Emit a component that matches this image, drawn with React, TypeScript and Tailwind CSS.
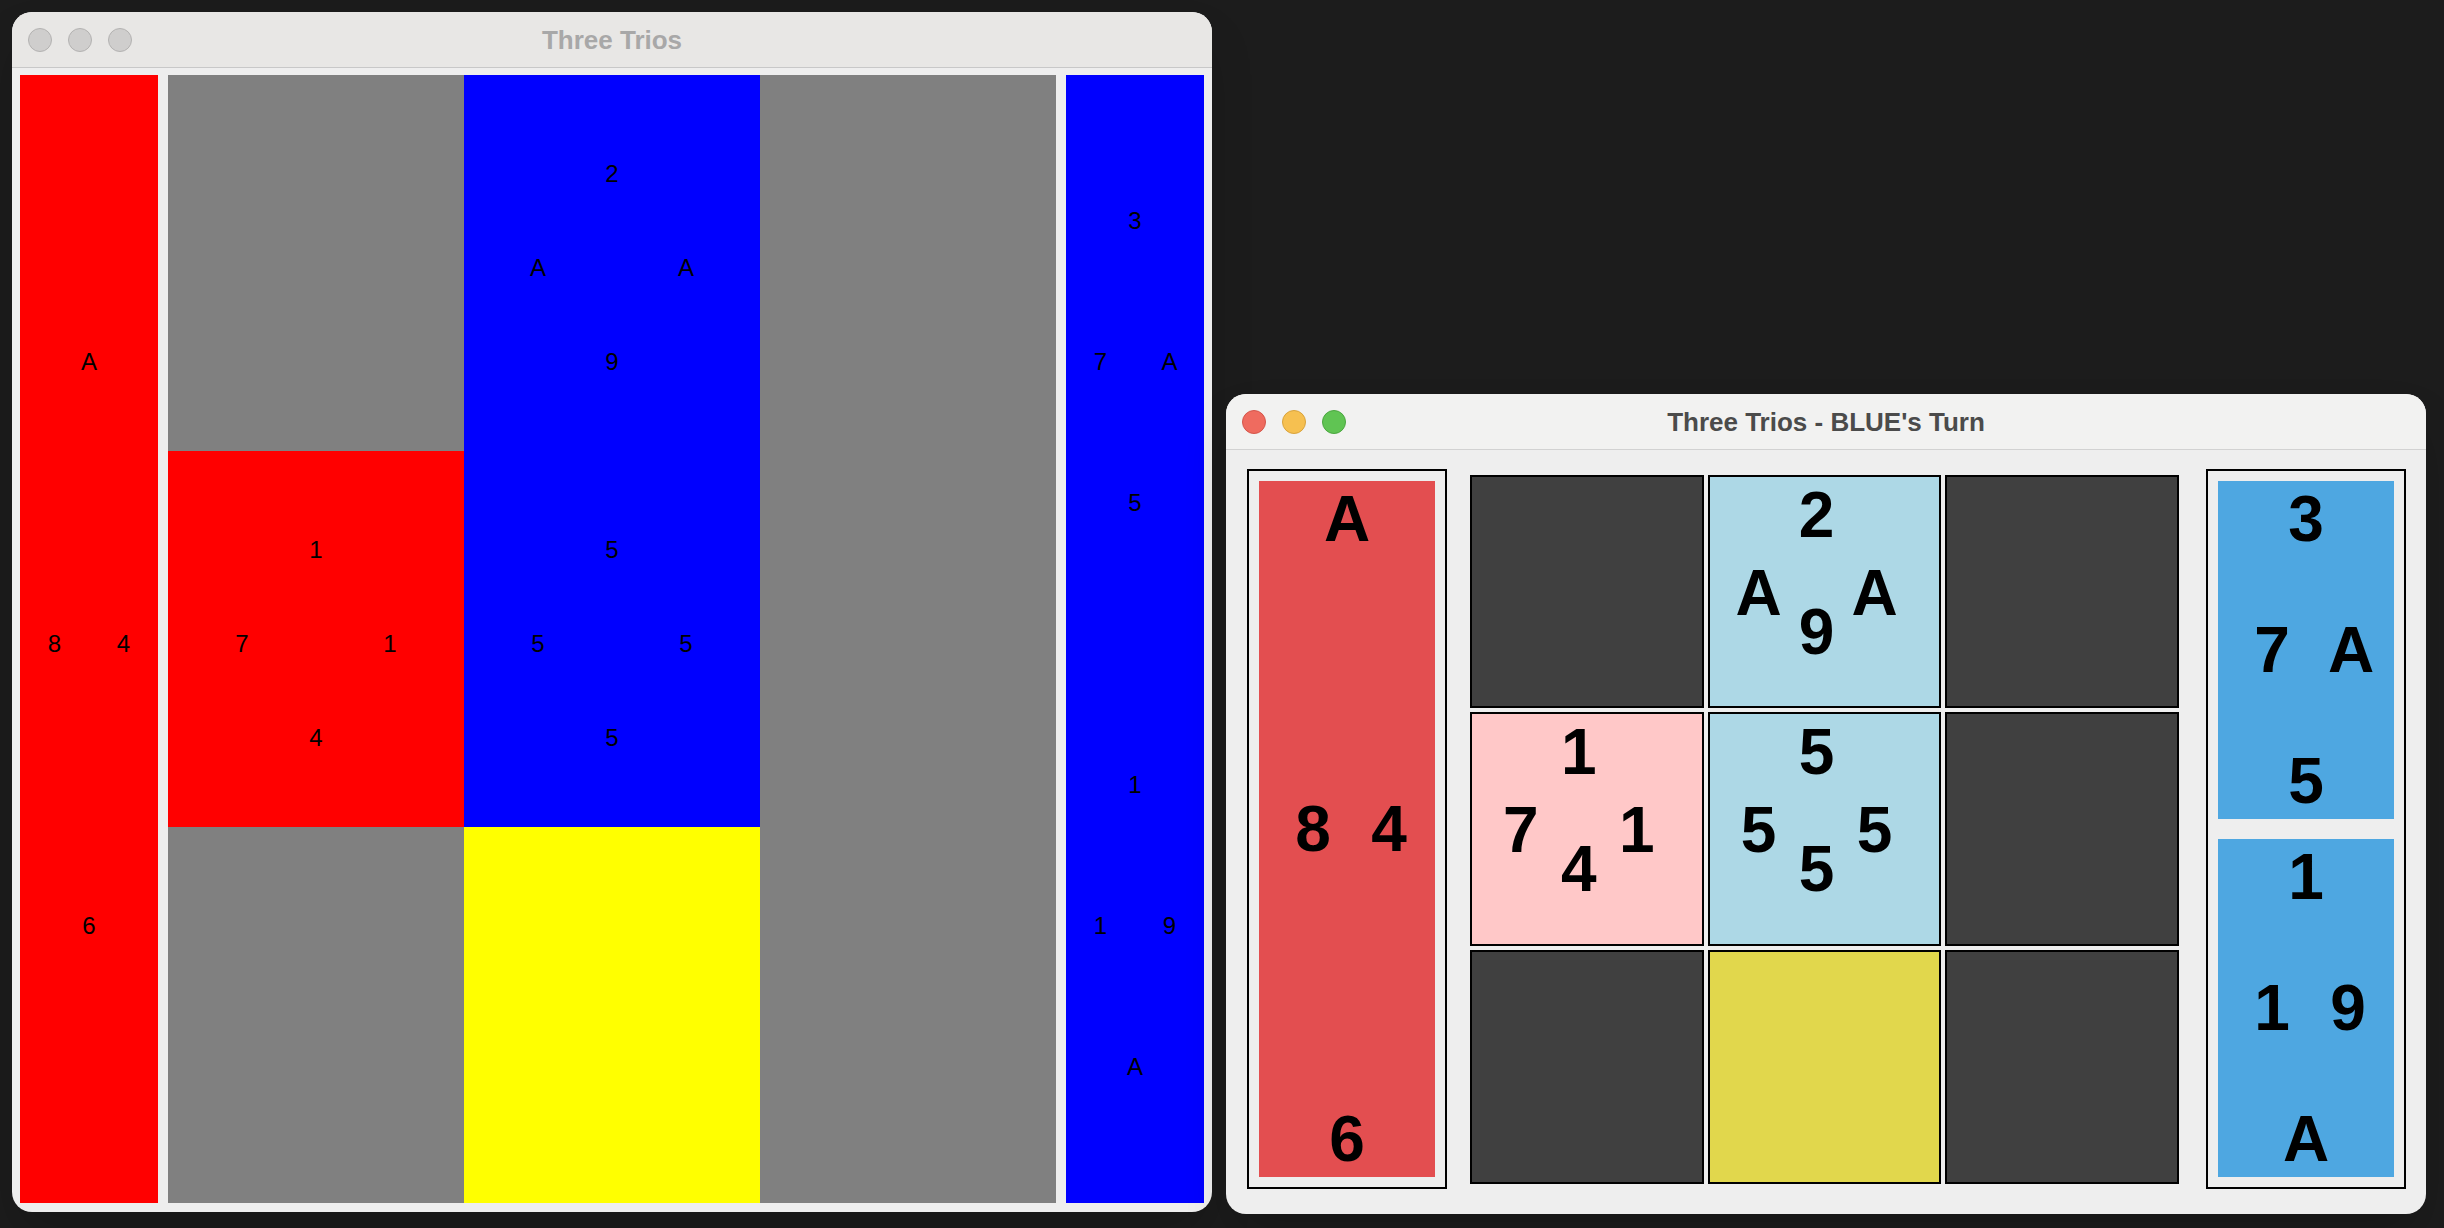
import React from "react";

type Vals = { n: string; e: string; s: string; w: string };

function Lights({ active }: { active: boolean }) {
  if (!active) {
    return (
      <div className="flex items-center gap-[16px] pl-[16px]">
        <div className="w-[24px] h-[24px] rounded-full bg-[#cfcecd] border border-[#b3b2b1]" />
        <div className="w-[24px] h-[24px] rounded-full bg-[#cfcecd] border border-[#b3b2b1]" />
        <div className="w-[24px] h-[24px] rounded-full bg-[#cfcecd] border border-[#b3b2b1]" />
      </div>
    );
  }
  return (
    <div className="flex items-center gap-[16px] pl-[16px]">
      <div className="w-[24px] h-[24px] rounded-full bg-[#ef6b5f] border border-[#d4564b]" />
      <div className="w-[24px] h-[24px] rounded-full bg-[#f6c050] border border-[#d9a33c]" />
      <div className="w-[24px] h-[24px] rounded-full bg-[#60c453] border border-[#4ba740]" />
    </div>
  );
}

function TitleBar({ title, active }: { title: string; active: boolean }) {
  return (
    <div
      className={`grid grid-cols-[1fr_auto_1fr] items-center h-[56px] border-b ${
        active ? "bg-[#f2f2f1] border-[#d2d2d2]" : "bg-[#e8e7e5] border-[#c8c8c8]"
      }`}
    >
      <Lights active={active} />
      <div
        className={`text-[26px] font-bold leading-none ${active ? "text-[#4b4b4b]" : "text-[#a8a8a8]"}`}
        style={{ fontFamily: '"Liberation Sans", Arial, sans-serif' }}
      >
        {title}
      </div>
      <div />
    </div>
  );
}

/* Small (plain) card used in the first window */
function SmallCard({ bg, pad, v }: { bg: string; pad: string; v: Vals }) {
  return (
    <div
      className={`${bg} ${pad} grid grid-cols-3 grid-rows-3 place-items-center text-[24px] leading-none text-black`}
      style={{ fontFamily: '"Liberation Sans", Arial, sans-serif' }}
    >
      <span />
      <span>{v.n}</span>
      <span />
      <span>{v.w}</span>
      <span />
      <span>{v.e}</span>
      <span />
      <span>{v.s}</span>
      <span />
    </div>
  );
}

/* Large bold hand card used in second window */
function HandCard({ bg, h, v }: { bg: string; h: string; v: Vals }) {
  return (
    <div
      className={`${bg} ${h} flex flex-col justify-between text-[64px] font-bold leading-[76px] text-black`}
      style={{ fontFamily: '"Liberation Sans", Arial, sans-serif' }}
    >
      <div className="text-center">{v.n}</div>
      <div className="flex justify-center pl-[8px] gap-[36px]">
        <span className="w-[40px] text-center">{v.w}</span>
        <span className="w-[40px] text-center">{v.e}</span>
      </div>
      <div className="text-center">{v.s}</div>
    </div>
  );
}

function CellRow({ a, b, c }: { a?: string; b?: string; c?: string }) {
  return (
    <div className="grid grid-cols-[58px_58px_58px] justify-center text-center h-[39px]">
      <span>{a ?? ""}</span>
      <span>{b ?? ""}</span>
      <span>{c ?? ""}</span>
    </div>
  );
}

function BoardCell({ bg, v }: { bg: string; v?: Vals }) {
  return (
    <div
      className={`${bg} border-2 border-black pt-[19px] pr-[16px] flex flex-col text-[64px] font-bold leading-[39px] text-black`}
      style={{ fontFamily: '"Liberation Sans", Arial, sans-serif' }}
    >
      {v && (
        <>
          <CellRow b={v.n} />
          <div className="h-[39px]" />
          <CellRow a={v.w} c={v.e} />
          <CellRow b={v.s} />
        </>
      )}
    </div>
  );
}

function LeftWindow() {
  const gridPad = "px-[37px] pt-[52px] pb-[42px]";
  return (
    <div className="absolute left-[12px] top-[12px] w-[1200px] h-[1200px] rounded-[20px] overflow-hidden bg-[#eeeeee] shadow-2xl flex flex-col">
      <TitleBar title="Three Trios" active={false} />
      <div className="flex gap-[10px] pt-[7px] px-[8px] pb-[8px]">
        <div className="w-[138px] h-[1128px] flex flex-col">
          <SmallCard
            bg="bg-[#ff0000] h-[1128px]"
            pad="px-[17.25px] pt-[146px] pb-[136px]"
            v={{ n: "A", e: "4", s: "6", w: "8" }}
          />
        </div>
        <div className="w-[888px] h-[1128px] grid grid-cols-3 grid-rows-3">
          <div className="bg-[#808080]" />
          <SmallCard bg="bg-[#0000ff]" pad={gridPad} v={{ n: "2", e: "A", s: "9", w: "A" }} />
          <div className="bg-[#808080]" />
          <SmallCard bg="bg-[#ff0000]" pad={gridPad} v={{ n: "1", e: "1", s: "4", w: "7" }} />
          <SmallCard bg="bg-[#0000ff]" pad={gridPad} v={{ n: "5", e: "5", s: "5", w: "5" }} />
          <div className="bg-[#808080]" />
          <div className="bg-[#808080]" />
          <div className="bg-[#ffff00]" />
          <div className="bg-[#808080]" />
        </div>
        <div className="w-[138px] h-[1128px] flex flex-col">
          <SmallCard
            bg="bg-[#0000ff] h-[564px]"
            pad="px-[17.25px] pt-[75.5px] pb-[65.5px]"
            v={{ n: "3", e: "A", s: "5", w: "7" }}
          />
          <SmallCard
            bg="bg-[#0000ff] h-[564px]"
            pad="px-[17.25px] pt-[75.5px] pb-[65.5px]"
            v={{ n: "1", e: "9", s: "A", w: "1" }}
          />
        </div>
      </div>
    </div>
  );
}

function RightWindow() {
  return (
    <div className="absolute left-[1226px] top-[394px] w-[1200px] h-[820px] rounded-[20px] overflow-hidden bg-[#eeeeee] shadow-2xl flex flex-col">
      <TitleBar title="Three Trios - BLUE's Turn" active={true} />
      <div className="flex items-center pl-[21px] pr-[20px] pt-[19px] pb-[24px]">
        <div className="w-[200px] h-[720px] border-2 border-black px-[10px] pt-[10px] pb-[10px] flex flex-col">
          <HandCard bg="bg-[#e34e50]" h="h-[696px]" v={{ n: "A", e: "4", s: "6", w: "8" }} />
        </div>
        <div className="ml-[23px] mr-[27px] w-[709px] h-[709px] grid grid-cols-3 grid-rows-3 gap-[4px]">
          <BoardCell bg="bg-[#404040]" />
          <BoardCell bg="bg-[#add8e6]" v={{ n: "2", e: "A", s: "9", w: "A" }} />
          <BoardCell bg="bg-[#404040]" />
          <BoardCell bg="bg-[#ffc8c8]" v={{ n: "1", e: "1", s: "4", w: "7" }} />
          <BoardCell bg="bg-[#add8e6]" v={{ n: "5", e: "5", s: "5", w: "5" }} />
          <BoardCell bg="bg-[#404040]" />
          <BoardCell bg="bg-[#404040]" />
          <BoardCell bg="bg-[#e1d74c]" />
          <BoardCell bg="bg-[#404040]" />
        </div>
        <div className="w-[200px] h-[720px] border-2 border-black px-[10px] pt-[10px] pb-[10px] flex flex-col gap-[20px]">
          <HandCard bg="bg-[#4ea7e1]" h="h-[338px]" v={{ n: "3", e: "A", s: "5", w: "7" }} />
          <HandCard bg="bg-[#4ea7e1]" h="h-[338px]" v={{ n: "1", e: "9", s: "A", w: "1" }} />
        </div>
      </div>
    </div>
  );
}

export default function App() {
  return (
    <div className="relative w-[2444px] h-[1228px] bg-[#1c1c1c] overflow-hidden">
      <LeftWindow />
      <RightWindow />
    </div>
  );
}
